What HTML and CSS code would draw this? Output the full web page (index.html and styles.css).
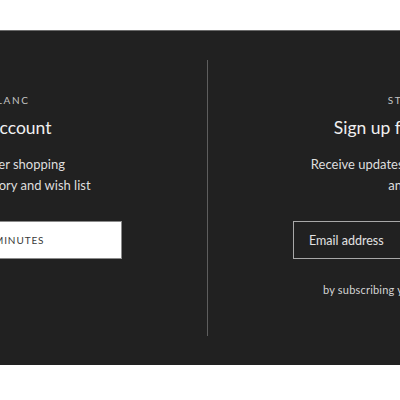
FILE: index.html
```html
<!DOCTYPE html>
<html lang="en">
<head>
<meta charset="utf-8">
<title>Account and newsletter</title>
<link rel="stylesheet" href="styles.css">
</head>
<body>
<div class="top-space"></div>
<section class="band">
  <div class="cols">
    <div class="col">
      <p class="eyebrow">LE CLUB BLANC</p>
      <h2 class="title">Create an account</h2>
      <p class="copy">Sign in to get faster shopping<br>Access your order history and wish list</p>
      <a class="btn" href="#">SIGN UP IN 2 MINUTES</a>
    </div>
    <div class="divider"></div>
    <div class="col">
      <p class="eyebrow">STAY UPDATED</p>
      <h2 class="title">Sign up for our newsletter</h2>
      <p class="copy">Receive updates about new arrivals, events<br>and great offers</p>
      <div class="field"><span class="placeholder">Email address</span></div>
      <p class="fine">by subscribing you accept our privacy policy</p>
    </div>
  </div>
</section>
</body>
</html>
```

FILE: styles.css
```css
html, body {
  margin: 0;
  padding: 0;
  background: #ffffff;
  overflow: hidden;
  font-family: "Lato", "Noto Sans", sans-serif;
}

.top-space {
  height: 30px;
}

.band {
  background: #212121;
  border-top: 1px solid #6a6a6a;
  height: 335px;
  box-sizing: border-box;
  padding: 29px 0 29px;
}

.cols {
  display: grid;
  grid-template-columns: 450px 1px 450px;
  margin-left: -243px;
  width: 901px;
  height: 100%;
}

.divider {
  background: #5e5e5e;
}

.col {
  display: flex;
  flex-direction: column;
  align-items: center;
  text-align: center;
  padding-top: 33px;
}

.eyebrow {
  margin: 0;
  font-size: 10px;
  line-height: 14px;
  letter-spacing: 1.6px;
  color: #c4c4c4;
}

.title {
  margin: 9px 0 0;
  font-size: 17.5px;
  line-height: 24px;
  font-weight: 400;
  color: #f0f0f0;
}

.copy {
  margin: 14px 0 0;
  font-size: 13px;
  line-height: 21px;
  color: #dedede;
}

.btn {
  margin-top: 25px;
  width: 280px;
  height: 38px;
  box-sizing: border-box;
  background: #ffffff;
  border: 1px solid #8a8a8a;
  display: flex;
  align-items: center;
  justify-content: center;
  font-size: 10px;
  letter-spacing: 0.9px;
  color: #3a3a3a;
  text-decoration: none;
}

.field {
  margin-top: 25px;
  width: 280px;
  height: 38px;
  box-sizing: border-box;
  border: 1px solid #a8a8a8;
  display: flex;
  align-items: center;
  padding-left: 15px;
  text-align: left;
}

.placeholder {
  font-size: 12.5px;
  color: #e2e2e2;
}

.fine {
  margin: 24px 0 0;
  font-size: 11px;
  line-height: 14px;
  letter-spacing: 0.2px;
  color: #d4d4d4;
}
```
